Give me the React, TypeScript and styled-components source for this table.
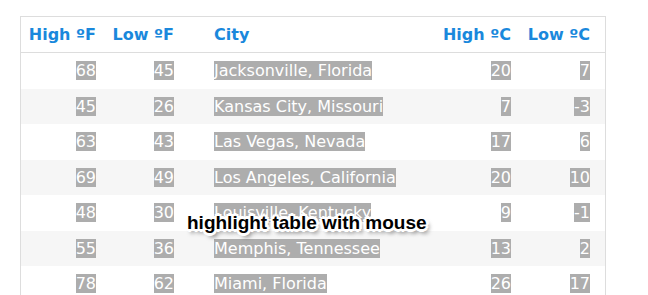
import React from "react";
import styled, { createGlobalStyle } from "styled-components";

const GlobalStyle = createGlobalStyle`
  html, body {
    margin: 0;
    padding: 0;
    background: #ffffff;
  }
`;

type City = {
  highF: number;
  lowF: number;
  city: string;
  highC: number;
  lowC: number;
};

const cities: City[] = [
  { highF: 68, lowF: 45, city: "Jacksonville, Florida", highC: 20, lowC: 7 },
  { highF: 45, lowF: 26, city: "Kansas City, Missouri", highC: 7, lowC: -3 },
  { highF: 63, lowF: 43, city: "Las Vegas, Nevada", highC: 17, lowC: 6 },
  { highF: 69, lowF: 49, city: "Los Angeles, California", highC: 20, lowC: 10 },
  { highF: 48, lowF: 30, city: "Louisville, Kentucky", highC: 9, lowC: -1 },
  { highF: 55, lowF: 36, city: "Memphis, Tennessee", highC: 13, lowC: 2 },
  { highF: 78, lowF: 62, city: "Miami, Florida", highC: 26, lowC: 17 },
];

const App = () => {
  return (
    <>
      <GlobalStyle />
      <Page>
        <Table>
          <HeadRow>
            <HeadCell $align="right">High ºF</HeadCell>
            <HeadCell $align="right">Low ºF</HeadCell>
            <HeadCell $align="left" $indent>
              City
            </HeadCell>
            <HeadCell $align="right">High ºC</HeadCell>
            <HeadCell $align="right">Low ºC</HeadCell>
          </HeadRow>
          {cities.map((c, i) => (
            <Row key={c.city} $striped={i % 2 === 1}>
              <Cell $align="right">
                <Selected>{c.highF}</Selected>
              </Cell>
              <Cell $align="right">
                <Selected>{c.lowF}</Selected>
              </Cell>
              <Cell $align="left" $indent>
                <Selected>{c.city}</Selected>
              </Cell>
              <Cell $align="right">
                <Selected>{c.highC}</Selected>
              </Cell>
              <Cell $align="right">
                <Selected>{c.lowC}</Selected>
              </Cell>
            </Row>
          ))}
        </Table>
        <Hint>highlight table with mouse</Hint>
      </Page>
    </>
  );
};

const Page = styled.div`
  position: relative;
  width: 648px;
  height: 295px;
  overflow: hidden;
  padding: 16px 0 0 20px;
  box-sizing: border-box;
`;

const Table = styled.div`
  width: 586px;
  box-sizing: border-box;
  border: 1px solid #dddddd;
  border-bottom: none;
  font-family: "DejaVu Sans", Verdana, sans-serif;
  font-size: 16px;
`;

const columns = "75px 78px 1fr 80px 79px";

const HeadRow = styled.div`
  display: grid;
  grid-template-columns: ${columns};
  padding-right: 15px;
  height: 35px;
  border-bottom: 1px solid #dddddd;
`;

const HeadCell = styled.div<{ $align: "left" | "right"; $indent?: boolean }>`
  display: flex;
  align-items: center;
  justify-content: ${(p) => (p.$align === "right" ? "flex-end" : "flex-start")};
  padding-left: ${(p) => (p.$indent ? "40px" : "0")};
  font-weight: bold;
  color: #1a88dc;
  white-space: nowrap;
`;

const Row = styled.div<{ $striped: boolean }>`
  display: grid;
  grid-template-columns: ${columns};
  padding-right: 15px;
  height: 35.5px;
  background: ${(p) => (p.$striped ? "#f6f6f6" : "#ffffff")};
`;

const Cell = styled.div<{ $align: "left" | "right"; $indent?: boolean }>`
  display: flex;
  align-items: center;
  justify-content: ${(p) => (p.$align === "right" ? "flex-end" : "flex-start")};
  padding-left: ${(p) => (p.$indent ? "40px" : "0")};
  white-space: nowrap;
`;

const Selected = styled.span`
  background: #adadad;
  color: #ffffff;
  line-height: 19px;
`;

const Hint = styled.div`
  position: absolute;
  left: 187px;
  top: 212px;
  font-family: "Liberation Sans", Arial, sans-serif;
  font-weight: bold;
  font-size: 19px;
  color: #000000;
  white-space: nowrap;
  text-shadow:
    -2px -2px 0 #fff, 0 -3px 0 #fff, 2px -2px 0 #fff,
    -3px 0 0 #fff, 3px 0 0 #fff,
    -2px 2px 0 #fff, 0 3px 0 #fff, 2px 2px 0 #fff,
    3px 4px 4px rgba(0, 0, 0, 0.6);
`;

export default App;
